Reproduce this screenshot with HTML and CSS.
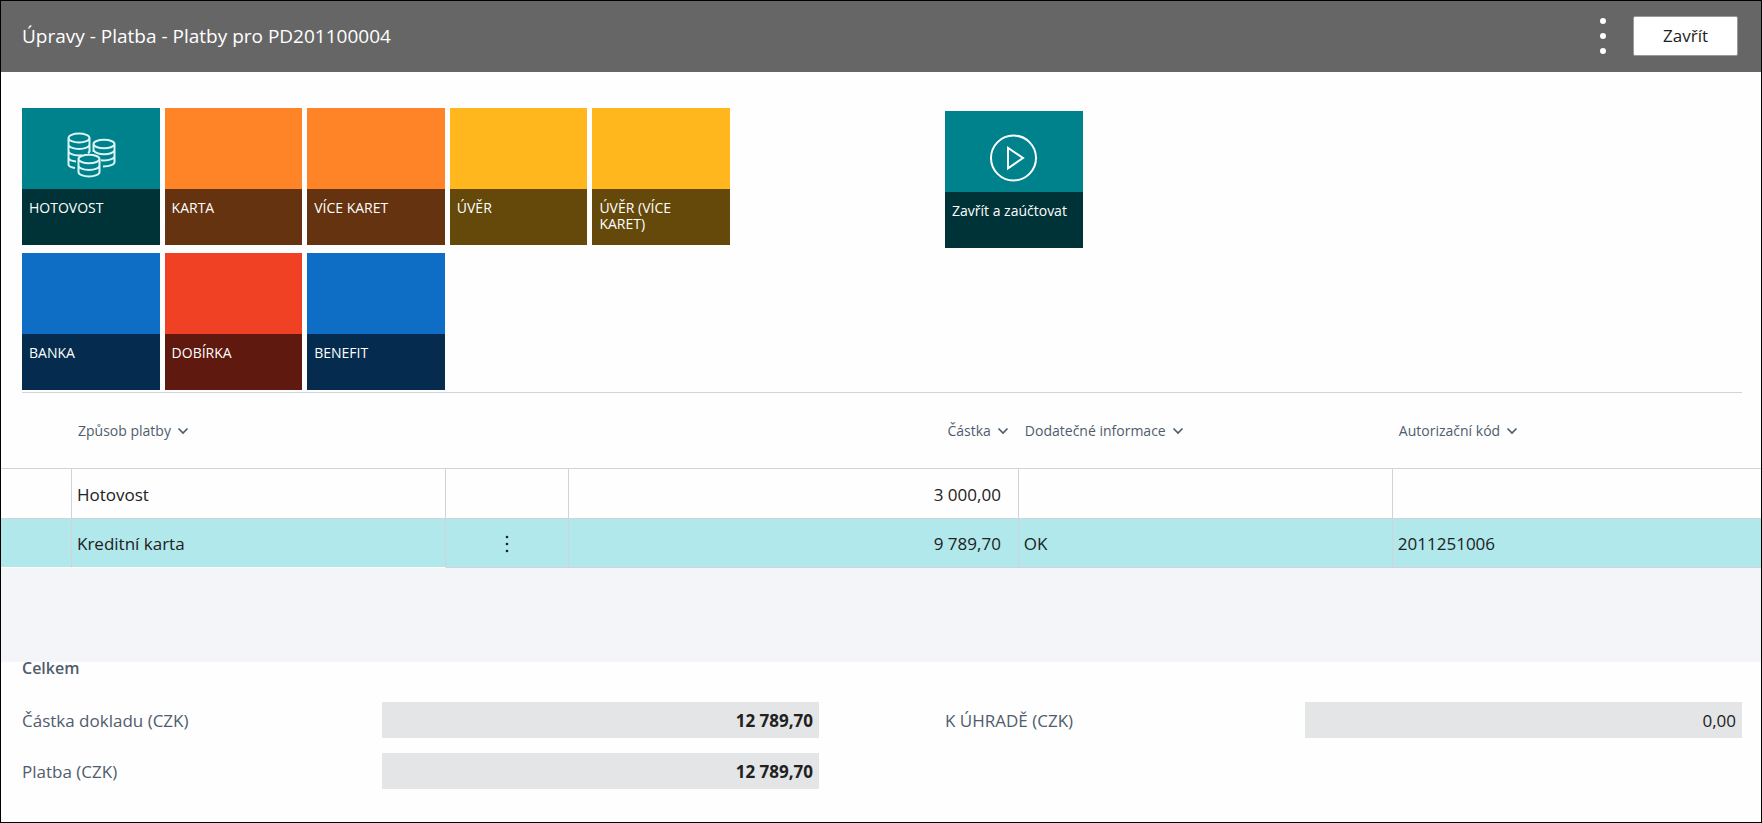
FILE: index.html
```html
<!DOCTYPE html>
<html lang="cs">
<head>
<meta charset="utf-8">
<title>Úpravy - Platba - Platby pro PD201100004</title>
<link rel="stylesheet" href="styles.css">
</head>
<body>
<svg class="sprite" aria-hidden="true">
  <symbol id="chevron" viewBox="0 0 12 8"><path d="M1.5 1.500 6 6l4.500-4.500" fill="none" stroke="currentColor" stroke-width="1.700"/></symbol>
</svg>
<div class="page">
  <header class="topbar">
    <h1 class="topbar-title">Úpravy - Platba - Platby pro PD201100004</h1>
    <button class="more" type="button" aria-label="Další možnosti">
      <svg width="8" height="38" viewBox="0 0 8 38" fill="#fff"><circle cx="4" cy="4" r="3"/><circle cx="4" cy="19" r="3"/><circle cx="4" cy="34" r="3"/></svg>
    </button>
    <button class="close" type="button">Zavřít</button>
  </header>

  <main>
    <section class="actions">
      <div class="tiles">
        <button class="tile teal" type="button">
          <span class="tile-art">
            <svg width="50" height="46" viewBox="0 0 50 46" fill="none" stroke="#d9f5f5" stroke-width="2">
              <path d="M2.500 6c0-2.500 4.700-4.500 10.500-4.500s10.500 2 10.500 4.500-4.700 4.500-10.500 4.500S2.500 8.500 2.500 6v26.500c0 1.500 2.500 2.800 6.500 3.500M23.500 6v14M2.500 12.500c0 2.500 4.700 4.500 10.500 4.500s10.500-2 10.500-4.500M2.500 19c0 2.500 4.700 4.500 10.500 4.500l3-.2M2.500 25.500c0 2 3 3.500 7.500 4M23.500 19c0 .8-.5 1.500-1.500 2"/>
              <path d="M27.500 12c0-2.300 4.700-4.200 10.500-4.200s10.500 1.900 10.500 4.200-4.700 4.300-10.500 4.300-10.500-2-10.500-4.300v8M48.500 12v18c0 2.500-4.500 4.500-11.500 4.500M27.500 18c1.500 2.800 5.500 4.300 10.500 4.300 5.800 0 10.500-2 10.500-4.500M35 28.300l3 .2c5.800 0 10.500-2 10.500-4.500"/>
              <path d="M12.500 27c0-2.300 4.700-4.300 10.500-4.300s10.500 2 10.500 4.300-4.700 4.300-10.500 4.300-10.500-2-10.500-4.300v13c0 2.500 4.700 4.500 10.500 4.500s10.500-2 10.500-4.500V27M12.500 33.500c0 2.500 4.700 4.500 10.500 4.500s10.500-2 10.500-4.500"/>
            </svg>
          </span>
          <span class="tile-label">HOTOVOST</span>
        </button>
        <button class="tile orange" type="button"><span class="tile-art"></span><span class="tile-label">KARTA</span></button>
        <button class="tile orange" type="button"><span class="tile-art"></span><span class="tile-label">VÍCE KARET</span></button>
        <button class="tile yellow" type="button"><span class="tile-art"></span><span class="tile-label">ÚVĚR</span></button>
        <button class="tile yellow" type="button"><span class="tile-art"></span><span class="tile-label">ÚVĚR (VÍCE KARET)</span></button>
        <button class="tile blue" type="button"><span class="tile-art"></span><span class="tile-label">BANKA</span></button>
        <button class="tile red" type="button"><span class="tile-art"></span><span class="tile-label">DOBÍRKA</span></button>
        <button class="tile blue" type="button"><span class="tile-art"></span><span class="tile-label">BENEFIT</span></button>
      </div>
      <div class="tiles post">
        <button class="tile teal" type="button">
          <span class="tile-art">
            <svg width="48" height="48" viewBox="0 0 48 48" fill="none" stroke="#fff" stroke-width="2"><circle cx="23.500" cy="24" r="22.500"/><path d="M18 13.800v20.500L33 24z"/></svg>
          </span>
          <span class="tile-label">Zavřít a zaúčtovat</span>
        </button>
      </div>
    </section>

    <table class="lines">
      <colgroup><col class="c-mark"><col class="c-method"><col class="c-menu"><col class="c-amount"><col class="c-info"><col class="c-code"></colgroup>
      <thead>
        <tr>
          <th></th>
          <th><button type="button">Způsob platby <svg width="12" height="8"><use href="#chevron"/></svg></button></th>
          <th></th>
          <th class="num"><button type="button">Částka <svg width="12" height="8"><use href="#chevron"/></svg></button></th>
          <th><button type="button">Dodatečné informace <svg width="12" height="8"><use href="#chevron"/></svg></button></th>
          <th><button type="button">Autorizační kód <svg width="12" height="8"><use href="#chevron"/></svg></button></th>
        </tr>
      </thead>
      <tbody>
        <tr><td></td><td>Hotovost</td><td></td><td class="num">3 000,00</td><td></td><td></td></tr>
        <tr class="selected">
          <td></td><td>Kreditní karta</td>
          <td class="menu"><button type="button" aria-label="Možnosti řádku"><svg width="4" height="18" viewBox="0 0 4 18" fill="#212121"><circle cx="2" cy="2" r="1.300"/><circle cx="2" cy="9" r="1.300"/><circle cx="2" cy="16" r="1.300"/></svg></button></td>
          <td class="num">9 789,70</td><td>OK</td><td>2011251006</td>
        </tr>
      </tbody>
    </table>
    <div class="filler"></div>

    <section class="totals">
      <h2>Celkem</h2>
      <div class="totals-grid">
        <div class="column">
          <div class="field"><label for="doc">Částka dokladu (CZK)</label><input id="doc" class="strong" readonly value="12 789,70"></div>
          <div class="field"><label for="paid">Platba (CZK)</label><input id="paid" class="strong" readonly value="12 789,70"></div>
        </div>
        <div class="column">
          <div class="field"><label for="due">K ÚHRADĚ (CZK)</label><input id="due" readonly value="0,00"></div>
        </div>
      </div>
    </section>
  </main>
</div>
</body>
</html>
```
FILE: styles.css
```css
* { box-sizing: border-box; }

body {
  margin: 0;
  font-family: "Open Sans", "Noto Sans", sans-serif;
  color: #212121;
}

button {
  font-family: inherit;
  border: 0;
  padding: 0;
  background: none;
  color: inherit;
  cursor: pointer;
}

svg { display: block; }

.sprite { display: none; }

.page {
  min-height: 100vh;
  border: 1px solid #000;
  background: #fefefe;
}

.topbar {
  display: flex;
  align-items: center;
  height: 71px;
  padding: 0 23px 2px 21px;
  background: #666;
  color: #fff;
}

.topbar-title {
  flex: 1;
  margin: 0;
  font-size: 19px;
  font-weight: 500;
}

.more { margin-right: 26px; }

.close {
  width: 105px;
  height: 40px;
  border: 1px solid #999;
  border-radius: 2px;
  background: #fff;
  color: #212121;
  font-size: 17px;
  font-weight: 500;
}

.actions {
  display: grid;
  grid-template-columns: 1fr 1fr;
  column-gap: 126px;
  margin: 0 19px 0 21px;
  padding: 36px 0 2px;
  border-bottom: 1px solid #d2d3d9;
}

.tiles {
  display: grid;
  grid-template-columns: repeat(5, 1fr);
  gap: 8px 5px;
  width: 708px;
  align-content: start;
}

.post { padding-top: 3px; }

.tile {
  display: flex;
  flex-direction: column;
  min-height: 137px;
  color: #fff;
  text-align: left;
}

.tile-art {
  display: flex;
  justify-content: center;
  align-items: center;
  width: 100%;
  height: 81px;
  padding-top: 12px;
}

.tile-label {
  flex: 1;
  width: 100%;
  padding: 11px 12px 8px 7px;
  font-size: 14px;
  line-height: 16px;
}

.teal .tile-art { background: #00828d; }
.teal .tile-label { background: #003337; }
.orange .tile-art { background: #ff8427; }
.orange .tile-label { background: #65330f; }
.yellow .tile-art { background: #ffb71d; }
.yellow .tile-label { background: #65490b; }
.blue .tile-art { background: #0e6dc5; }
.blue .tile-label { background: #052b4e; }
.red .tile-art { background: #f04124; }
.red .tile-label { background: #5f190e; }

.lines {
  width: 100%;
  table-layout: fixed;
  border-collapse: separate;
  border-spacing: 0;
}

.c-mark { width: 71px; }
.c-method { width: 21.25%; }
.c-menu { width: 7%; }
.c-amount { width: 25.55%; }
.c-info { width: 21.25%; }

.lines th {
  height: 76px;
  padding: 0 6px;
  border-bottom: 1px solid #d2d3d9;
  color: #505c6d;
  font-size: 14px;
  font-weight: 400;
  text-align: left;
}

.lines th button {
  display: inline-flex;
  align-items: center;
  gap: 6px;
  font-size: 14px;
}

.lines td {
  height: 50px;
  padding: 2px 5px 0;
  border-right: 1px solid #d2d3d9;
  border-bottom: 1px solid #d2d3d9;
  font-size: 17px;
  line-height: 24px;
}

.lines th.num { padding-right: 10px; text-align: right; }
.lines td.num { padding-right: 17px; text-align: right; }
.lines td:last-child { border-right: 0; }
.lines .selected td { height: 49px; background: #b0e8eb; }
.lines .selected td:nth-child(-n+2) { border-bottom-color: #fefefe; }
.menu button { display: block; margin: 0 auto; }

.filler {
  height: 94px;
  background: #f4f5f8;
}

.totals { padding: 0 19px 32px 21px; }

.totals h2 {
  margin: 0 0 28px;
  color: #505c6d;
  font-size: 16px;
  font-weight: 600;
  line-height: 12px;
}

.totals-grid {
  display: grid;
  grid-template-columns: 1fr 1fr;
  column-gap: 126px;
}

.column {
  display: grid;
  row-gap: 15px;
  align-content: start;
}

.field {
  display: grid;
  grid-template-columns: 14fr 17fr;
  align-items: center;
}

.field label {
  color: #505c6d;
  font-size: 17px;
}

.field input {
  width: 100%;
  height: 36px;
  padding: 0 6px;
  border: 0;
  background: #e4e5e7;
  color: #212121;
  font-family: inherit;
  font-size: 17px;
  text-align: right;
}

.field .strong { font-weight: 700; }
```
